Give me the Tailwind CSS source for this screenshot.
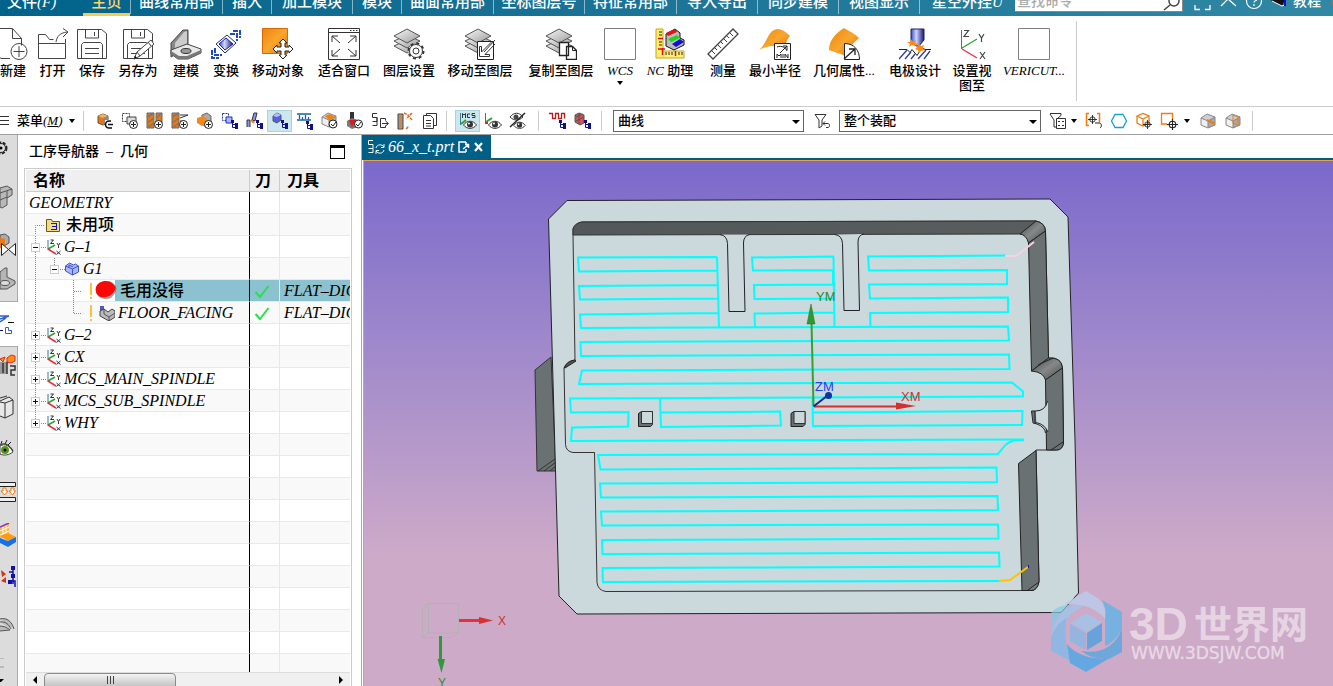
<!DOCTYPE html>
<html lang="zh-CN">
<head>
<meta charset="utf-8">
<title>66_x_t.prt</title>
<script src="https://cdn.jsdelivr.net/npm/@tailwindcss/browser@4"></script>
</head>
<body class="h-screen overflow-hidden flex flex-col bg-white text-black font-['Liberation_Serif','Noto_Sans_CJK_SC',serif]">

<svg class="absolute w-0 h-0" aria-hidden="true">
  <defs>
    <linearGradient id="orange" x1="0" y1="0" x2="1" y2="1"><stop offset="0" stop-color="#ee8410"/><stop offset=".5" stop-color="#f8a62c"/><stop offset="1" stop-color="#ea7308"/></linearGradient>
    <linearGradient id="steel" x1="0" y1="0" x2="1" y2="1"><stop offset="0" stop-color="#fafafa"/><stop offset="1" stop-color="#9a9a9a"/></linearGradient>
    <linearGradient id="blue" x1="0" y1="0" x2="1" y2="0"><stop offset="0" stop-color="#3b49c4"/><stop offset=".4" stop-color="#cdd5ff"/><stop offset="1" stop-color="#15157a"/></linearGradient>
    <symbol id="layers" viewBox="0 0 32 32"><g fill="url(#steel)" stroke="#555"><path d="M1 18l13 7 13-7-13-6z"/><path d="M1 13l13 7 13-7-13-6z"/><path d="M1 8l13 7 13-7L14 1z"/></g></symbol>
    <symbol id="floppy" viewBox="0 0 32 32"><path d="M1.500 1.500h24l5 4v25h-29zM9.500 2v8h13V2M18.500 4v4M5.500 30V16.500l2-2h17l2 2V30M9 20.500h14M9 25.500h14" fill="none" stroke="#444"/></symbol>
    <symbol id="csys" viewBox="0 0 16 16"><g fill="none"><path d="M2 1v10" stroke="#318096"/><path d="M2 10l7-4" stroke="#2ba52b" stroke-width="1.500"/><path d="M2 10l8 5" stroke="#f02846" stroke-width="1.500"/><path d="M4.500 1h3l-3 3.500h3.500M11 4l1.500 2.500L14 4M12.500 6.500V9M10.500 12l4 3.500M14.500 12l-4 3.500" stroke="#333"/></g></symbol>
    <symbol id="plus" viewBox="0 0 9 9"><circle cx="4.500" cy="4.500" r="4" fill="#fff" stroke="#222"/><path d="M4.500 2v5M2 4.500h5" stroke="#222"/></symbol>
    <symbol id="tree" viewBox="0 0 8 9"><path d="M1.500 1v6.500h4M1.500 4.500h4" fill="none" stroke="#10108c"/><path d="M0 0h3v3H0zM4 3h3v3H4zM4 6h3v3H4z" fill="#10108c"/></symbol>
    <symbol id="eye" viewBox="0 0 14 9"><path d="M.5 5C4 0 10 0 13.500 5 10 9.500 4 9.500 .5 5z" fill="#fff" stroke="#333"/><circle cx="7" cy="4.500" r="3" fill="#333"/><circle cx="6" cy="3.500" r="1" fill="#fff"/></symbol>
    <symbol id="box" viewBox="0 0 16 16"><path d="M1 5l6-4 8 3v8l-7 3-7-3z" fill="#cfcfcf"/><path d="M1 5l7 3v7l-7-3z" fill="#efefef"/><path d="M8 8l7-4v8l-7 3z" fill="#a9a9a9"/><path d="M1 5l6-4 8 3v8l-7 3-7-3zM1 5l7 3 7-4M8 8v7" fill="none" stroke="#888"/></symbol>
    <symbol id="obox" viewBox="0 0 12 13"><path d="M1 3l5-2 5 2v7l-5 2-5-2z" fill="#e9780c" stroke="#555"/><path d="M1 3l5 2 5-2-5-2z" fill="#f8b05a"/><path d="M6 5l5-2v7l-5 2z" fill="#888"/></symbol>
    <symbol id="target" viewBox="0 0 10 10"><circle cx="5" cy="5" r="3" fill="none" stroke="#222"/><path d="M5 0v10M0 5h10" stroke="#222"/></symbol>
    <symbol id="expand" viewBox="0 0 20 22"><path d="M9.500 0v22M15 11.500h5" stroke="#888" stroke-dasharray="1 1" fill="none"/><rect x="5.500" y="7.500" width="8" height="8" fill="#fff" stroke="#ccc"/><path d="M7 11.500h5M9.500 9v5" stroke="#111"/></symbol>
    <symbol id="tick" viewBox="0 0 16 16"><path d="M1.500 9l4.500 5 8.500-11" fill="none" stroke="#28e04c" stroke-width="2"/></symbol>
  </defs>
</svg>

<!-- Ribbon tabs -->
<header class="h-4 shrink-0 overflow-hidden bg-linear-to-r from-[#00628a] to-[#3088a5] flex text-white text-[15px] font-medium whitespace-nowrap">
  <nav class="flex shrink-0 h-4">
    <a href="#" class="w-[83px] pl-[7px] h-4 leading-4 -translate-y-1.5">文件<i>(F)</i></a>
    <a href="#" class="w-[47px] h-4 border-b-3 border-[#ffc84a] text-[#ffd468] text-center"><span class="block leading-4 -translate-y-1.5">主页</span></a>
    <a href="#" class="w-[93px] h-3.5 border-x border-white/50 text-center"><span class="block leading-4 -translate-y-1.5">曲线常用部</span></a>
    <a href="#" class="w-[49px] h-3.5 border-r border-white/50 text-center"><span class="block leading-4 -translate-y-1.5">插入</span></a>
    <a href="#" class="w-[81px] h-3.5 border-r border-white/50 text-center"><span class="block leading-4 -translate-y-1.5">加工模块</span></a>
    <a href="#" class="w-[49px] h-3.5 border-r border-white/50 text-center"><span class="block leading-4 -translate-y-1.5">模块</span></a>
    <a href="#" class="w-[92px] h-3.5 border-r border-white/50 text-center"><span class="block leading-4 -translate-y-1.5">曲面常用部</span></a>
    <a href="#" class="w-[91px] h-3.5 border-r border-white/50 text-center"><span class="block leading-4 -translate-y-1.5">坐标图层号</span></a>
    <a href="#" class="w-[92px] h-3.5 border-r border-white/50 text-center"><span class="block leading-4 -translate-y-1.5">特征常用部</span></a>
    <a href="#" class="w-[81px] h-3.5 border-r border-white/50 text-center"><span class="block leading-4 -translate-y-1.5">导入导出</span></a>
    <a href="#" class="w-[81px] h-3.5 border-r border-white/50 text-center"><span class="block leading-4 -translate-y-1.5">同步建模</span></a>
    <a href="#" class="w-[81px] h-3.5 border-r border-white/50 text-center"><span class="block leading-4 -translate-y-1.5">视图显示</span></a>
    <a href="#" class="w-[95px] h-3.5 text-center"><span class="block leading-4 -translate-y-1.5">星空外挂<i>U</i></span></a>
  </nav>
  <label class="w-[168px] shrink-0 h-3 bg-white border-b border-r border-[#888] flex justify-between overflow-hidden">
    <input aria-label="查找命令" placeholder="查找命令" class="w-32 h-4 -mt-1.5 pl-0.5 text-sm placeholder:text-[#aaa] outline-none">
    <svg class="w-5 h-3" viewBox="0 0 20 12" fill="none" stroke="#444" stroke-width="1.500"><circle cx="12" cy="1" r="5"/><path d="M8 5l-6 5"/></svg>
  </label>
  <div class="flex shrink-0">
    <button aria-label="全屏" class="w-[36px] h-4"><svg class="w-9 h-4" viewBox="0 0 36 16" fill="none" stroke="#fff" stroke-width="1.300"><path d="M12 5v4.500h5M22 9.500h5V5"/></svg></button>
    <button aria-label="最小化功能区" class="w-[24px] h-4"><svg class="w-6 h-4" viewBox="0 0 24 16" fill="none" stroke="#fff" stroke-width="1.300"><path d="M2 6l7-7 8 7"/></svg></button>
    <button aria-label="帮助" class="w-[26px] h-4"><svg class="w-[26px] h-4" viewBox="0 0 26 16" fill="none" stroke="#fff" stroke-width="1.200"><circle cx="11" cy="1" r="7.500"/><path d="M9-1c0-3 5-3 5 0 0 2-3 1.500-3 3.500M11 4v2"/></svg></button>
    <button class="flex h-4"><svg class="w-6 h-4" viewBox="0 0 24 16"><path d="M3 1l10 5 3-6H2z" fill="#111"/><path d="M3 1l10 5 3-1" stroke="#fff" fill="none"/><path d="M16 0v6" stroke="#1010c0" stroke-width="2"/></svg><span class="text-[14px] leading-4 -translate-y-1.5">教程</span></button>
    <svg class="w-4 h-4" viewBox="0 0 16 16"><circle cx="16" cy="2" r="6" fill="#777"/></svg>
  </div>
</header>

<!-- Ribbon commands -->
<section class="h-[91px] shrink-0 border-b border-[#ccc] flex overflow-hidden text-[13px] leading-[15px] text-center font-medium whitespace-nowrap *:shrink-0">
  <div class="flex items-start h-20 mt-[5px] -ml-[7px] border-r border-[#ccc] pr-0.5 *:shrink-0 *:flex *:flex-col *:items-center *:gap-[3px] *:pt-[7px] *:h-20">
    <button class="w-[40px]"><svg class="w-8 h-8" viewBox="0 0 32 32" fill="none" stroke="#444"><path d="M4 30H.5V.5h15l9 10v7M15.500 1v9.500h9M4 30.500h9"/><circle cx="22" cy="23.500" r="8"/><path d="M22 18v11M16.500 23.500h11"/></svg>新建</button>
    <button class="w-[39px]"><svg class="w-8 h-8" viewBox="0 0 32 32" fill="none" stroke="#444"><path d="M1.500 30.500V6.500h7l4 5h4M1.500 15.500h27v15h-27M19 14c1-6 4-9 11-10M26 .5l5 3.500-5 5M28.500 15v-4"/></svg>打开</button>
    <button class="w-[40px]"><svg class="w-8 h-8"><use href="#floppy"/></svg>保存</button>
    <button class="w-[52px]"><svg class="w-8 h-8" viewBox="0 0 32 32"><use href="#floppy"/><path d="M12 31l3-7 14-12 3 4-14 12z" fill="#fff" stroke="#444"/><path d="M12 31l1-3 2 2zM15 24l3 4M26 14l3 4" stroke="#444"/></svg>另存为</button>
    <button class="w-[44px]"><svg class="w-8 h-8" viewBox="0 0 32 32"><path d="M1 15L13 2l5 0v17L1 29z" fill="#888" stroke="#444"/><path d="M5 15L14 4l3-1v14L5 22z" fill="#ccc"/><path d="M1 22l16-6 14 5v4L18 31H8l-7-5z" fill="#e8e8e8" stroke="#444"/><path d="M31 22v3L18 31H8l-7-5v-3l8 5h8z" fill="#777"/><ellipse cx="16" cy="23" rx="5" ry="2.500" fill="#999" stroke="#333"/></svg>建模</button>
    <button class="w-[36px]"><svg class="w-8 h-8" viewBox="0 0 32 32"><path d="M6 16L17 7l9 8-11 10z" fill="#fff" stroke="#222c80"/><path d="M9 16l7-6 7 6-8 6z" fill="url(#blue)" stroke="#1b248c"/><path d="M23 3h7v7M20 6h7v7M2 22v8h7M5 20v7h7" fill="none" stroke="#2048c0" stroke-width="2" stroke-dasharray="5 1"/></svg>变换</button>
    <button class="w-[68px]"><svg class="w-8 h-8" viewBox="0 0 32 32"><path d="M.5.500h25v25H.5z" fill="url(#orange)" stroke="#d66a00"/><path d="M21 11l4 4h-2v4h4v-2l4 4-4 4v-2h-4v4h2l-4 4-4-4h2v-4h-4v2l-4-4 4-4v2h4v-4h-2z" fill="#fff" stroke="#222"/></svg>移动对象</button>
    <button class="w-[64px]"><svg class="w-8 h-8" viewBox="0 0 32 32" fill="none" stroke="#333"><path d="M.5.500h31v31H.5zM.5 4.500h31M22 2.500h1.500M25 2.500h1.500M28 2.500h1.500M4 14V8h6M4 8l8 7M22 8h6v6M28 8l-8 7M4 22v6h6M4 28l8-7M22 28h6v-6M28 28l-8-7"/></svg>适合窗口</button>
    <button class="w-[66px]"><svg class="w-8 h-8" viewBox="0 0 32 32"><use href="#layers"/><circle cx="23" cy="23" r="7.500" fill="#fff" stroke="#333" stroke-width="2" stroke-dasharray="3 2.900"/><circle cx="23" cy="23" r="6.500" fill="#fff" stroke="#333"/><circle cx="23" cy="23" r="3" fill="none" stroke="#333"/></svg>图层设置</button>
    <button class="w-[76px]"><svg class="w-8 h-8" viewBox="0 0 32 32"><use href="#layers"/><path d="M13.500 13.500h16v18h-16z" fill="#fff" stroke="#222"/><path d="M31 12L20 24M28 13.500L17.500 24v-5.500h-2v10h10v-2H21L31 16" fill="none" stroke="#333"/></svg>移动至图层</button>
    <button class="w-[86px]"><svg class="w-8 h-8" viewBox="0 0 32 32"><use href="#layers"/><path d="M14.500 14.500h9v13h-9zM21.500 18.500h6l4 4v9h-10z" fill="#fff" stroke="#222" stroke-width="1.300"/><path d="M27.500 18.500v4h4" fill="none" stroke="#222"/></svg>复制至图层</button>
    <button class="w-[32px]"><svg class="w-8 h-8" viewBox="0 0 32 32"><path d="M.5.500h31v31H.5z" fill="#fff" stroke="#808080"/></svg><i>WCS</i><svg class="w-1.5 h-1" viewBox="0 0 6 4"><path d="M0 0h6L3 4z"/></svg></button>
    <button class="w-[68px]"><svg class="w-8 h-8" viewBox="0 0 32 32"><path d="M2 1h7v22h21v7H2z" fill="#ffee72" stroke="#c9a515"/><path d="M5 4h3M5 7h3M5 14h3M5 17h3M12 24v3M15 24v3M18 24v3M25 24v3M28 24v3" stroke="#222"/><path d="M4 10.500h5M4 21h7M8.500 20v7M21.500 23v5" stroke="#e01010" stroke-width="1.500"/><path d="M12 6v12l8 4 10-5v-5l-4-2V5l-5-4z" fill="#bbb" stroke="#111"/><path d="M12 5l9-4 2 3-9 4z" fill="#e81010"/><path d="M14 11l9-4 3 3-9 4z" fill="#18d818"/><path d="M18 16l8-5 4 3-8 5z" fill="#1010d8"/></svg><span><i>NC</i> 助理</span></button>
    <button class="w-[38px]"><svg class="w-8 h-8" viewBox="0 0 32 32"><path d="M1 26L26 1l5 5L6 31z" fill="#fff" stroke="#444" stroke-width="1.300"/><path d="M5 23l3 3M8 20l2 2M11 17l3 3M14 14l2 2M17 11l3 3M20 8l2 2M23 5l3 3" stroke="#444"/></svg>测量</button>
    <button class="w-[66px]"><svg class="w-8 h-8" viewBox="0 0 32 32"><path d="M0 22C8 16 8 3 18 1c5 0 9 3 13 7-4 4-4 8-5 16-8-7-14-8-26-2z" fill="url(#orange)"/><path d="M15.500 15.500h16v16h-16z" fill="#fff" stroke="#222"/><path d="M18 19c5-2 9 1 10 4M21 25l7-7M24 18h4v4M18 30v-4l2 2 2-2v4M24 26v4M26 30v-4l3 4v-4" fill="none" stroke="#222"/></svg>最小半径</button>
    <button class="w-[72px]"><svg class="w-8 h-8" viewBox="0 0 32 32"><path d="M1 22C1 12 8 5 16 0c5 3 10 5 15 10-6 5-10 10-12 19-6-4-12-4-18-7z" fill="url(#orange)"/><path d="M16.500 15.500c10 0 15 7 15 16h-15z" fill="#fff" stroke="#222"/><path d="M16 31l11-10M21 21h6v6" fill="none" stroke="#222" stroke-width="1.300"/></svg>几何属性...</button>
    <button class="w-[70px]"><svg class="w-8 h-8" viewBox="0 0 32 32"><path d="M12 1h13v11l-5 6h-3l-5-5z" fill="url(#blue)" stroke="#222060"/><path d="M0 21.500h8l3 3 2-3 5 6 5-8 3 2h6" fill="none" stroke="#222"/><path d="M0 31l8-9M6 31l6-7M12 31l4-5M19 31l8-9M25 31l6-8" stroke="#2b3fa0" stroke-width="1.300"/><path d="M11 14l1-3 2 3 3-2-1 3 3 1-3 2-3-1-3 2 1-3-3-2zM19 18l1-2 2 2 3-1-1 3 2 2-4 1-2 2-1-3-3-1z" fill="#ff8a10"/></svg>电极设计</button>
    <button class="w-[44px]"><svg class="w-8 h-8" viewBox="0 0 32 32" fill="none"><path d="M5.500 2v19" stroke="#318096"/><path d="M6 20l15-9" stroke="#2ba52b" stroke-width="1.300"/><path d="M6 21l15 9" stroke="#f02846" stroke-width="1.300"/><path d="M8 2.500h4.500L8 8.500h5M23 6l2.500 4L28 6M25.500 10v4M24 24l5 7M29 24l-5 7" stroke="#444" stroke-width="1.200"/></svg><span>设置视<br>图至</span></button>
    <button class="w-[80px]"><svg class="w-8 h-8" viewBox="0 0 32 32"><path d="M.5.500h31v31H.5z" fill="#fff" stroke="#808080"/></svg><i>VERICUT...</i></button>
  </div>
</section>

<!-- Selection bar -->
<section class="h-7 shrink-0 border-b border-[#a0a0a0] flex items-center text-[13px] overflow-hidden font-medium *:shrink-0">
  <button class="flex items-center w-[83px] h-6 whitespace-nowrap"><svg class="w-[17px] h-3" viewBox="0 0 17 12"><path d="M0 1.500h9M0 5.500h9M0 9.500h9" stroke="#333"/></svg>菜单<i>(<u>M</u>)</i><svg class="w-1.5 h-1 ml-1.5" viewBox="0 0 6 4"><path d="M0 0h6L3 4z"/></svg></button>
  <div class="flex items-center border-l border-r border-[#ccc] pl-2 pr-1 h-5 *:w-[25px] *:h-[22px] *:flex *:items-center *:justify-center">
    <button aria-label="创建程序"><svg class="w-[18px] h-[18px]" viewBox="0 0 18 18"><use href="#obox" x="1" y="1" width="12" height="13"/><path d="M9 8h8v9H9z" fill="#fff"/><path d="M15 9h-2a3 3 0 000 7h3M12 12.500h5" fill="none" stroke="#111" stroke-width="1.600"/></svg></button>
    <button aria-label="创建几何"><svg class="w-[18px] h-[18px]" viewBox="0 0 18 18"><path d="M1.500 1.500h7v8h-7z" fill="#fff" stroke="#333" stroke-dasharray="2 1"/><path d="M6 5h9v7H6z" fill="#ddd" stroke="#444"/><use href="#plus" x="8" y="8" width="9" height="9"/></svg></button>
    <button aria-label="创建刀具"><svg class="w-[18px] h-[18px]" viewBox="0 0 18 18"><path d="M1 1h7v15H1zM10 1h6v10h-6z" fill="#e9780c" stroke="#666"/><path d="M1 5l7-4M1 11l7-5M1 16l7-5M10 6l6-5" stroke="#777" stroke-width="1.500"/><use href="#plus" x="8" y="8" width="9" height="9"/></svg></button>
    <button aria-label="创建方法"><svg class="w-[18px] h-[18px]" viewBox="0 0 18 18"><path d="M1 1h7v15H1z" fill="#e9780c" stroke="#666"/><path d="M1 5l7-4M1 11l7-5M1 16l7-5" stroke="#777" stroke-width="1.500"/><path d="M9 3h8M9 6l8-3M9 9h5" stroke="#333"/><use href="#plus" x="8" y="8" width="9" height="9"/></svg></button>
    <button aria-label="创建工序"><svg class="w-[18px] h-[18px]" viewBox="0 0 18 18"><path d="M6 3l5-2 4 3v9l-5 2-4-3z" fill="#aaa" stroke="#666"/><path d="M1 6l6-2 4 3v5l-5 2-5-3z" fill="#f08a20"/><use href="#plus" x="8" y="8" width="9" height="9"/></svg></button>
    <button aria-label="程序顺序视图"><svg class="w-[18px] h-[18px]" viewBox="0 0 18 18"><path d="M1.500 1.500h6v7h-6z" fill="#fff" stroke="#2233b0" stroke-dasharray="2 1"/><path d="M5 5h6v6H5z" fill="#a8b8ff" stroke="#2233b0"/><use href="#tree" x="10" y="8" width="8" height="9"/></svg></button>
    <button aria-label="机床视图"><svg class="w-[18px] h-[18px]" viewBox="0 0 18 18"><path d="M1 15V8h3v7M6 8l2-7h3L9 9z" fill="#8797ee" stroke="#333"/><path d="M5 8l3 3" stroke="#ee8010" stroke-width="2"/><use href="#tree" x="10" y="8" width="8" height="9"/></svg></button>
    <button aria-label="几何视图" class="bg-[#cde7ee] border border-[#a9d4df]"><svg class="w-[18px] h-[18px]" viewBox="0 0 18 18"><path d="M2 4l4-3 4 2v5l-4 3-4-2z" fill="#4d62e4" stroke="#555"/><path d="M2 4l4-3 4 2-4 2z" fill="#b3bfff"/><use href="#tree" x="10" y="8" width="8" height="9"/></svg></button>
    <button aria-label="加工方法视图"><svg class="w-[18px] h-[18px]" viewBox="0 0 18 18"><path d="M1 2h14M1 8h14M3.500 3v4M6.500 5v3M9.500 3v4M12.500 5v3" fill="none" stroke="#1860a0" stroke-width="1.300"/><use href="#tree" x="10" y="9" width="8" height="9"/></svg></button>
    <button aria-label="校验"><svg class="w-[18px] h-[18px]" viewBox="0 0 18 18"><use href="#box" width="16" height="16"/><path d="M4 4l5-2 5 3-5 4z" fill="#f08010"/><circle cx="12" cy="12" r="4" fill="#fff" stroke="#222"/><path d="M10 12l2 2 3-4" fill="none" stroke="#222"/></svg></button>
    <button aria-label="机床仿真"><svg class="w-[18px] h-[18px]" viewBox="0 0 18 18"><path d="M5 0v7M7 0v7" stroke="#333" stroke-width="2"/><path d="M1 9l5-3 6 2v7l-6 2-5-3z" fill="#777"/><path d="M3 8h7l-4 7z" fill="#e01818"/><circle cx="12.500" cy="12" r="4" fill="#fff" stroke="#222"/><path d="M10 12l2 2 3-4" fill="none" stroke="#222"/></svg></button>
    <button aria-label="后处理"><svg class="w-[18px] h-[18px]" viewBox="0 0 18 18" fill="none" stroke="#333"><path d="M6 1.500H1.500v4H6v4H1.500M6 5.500v8H1.500M9.500 6.500h5v2M9.500 6.500v9h5v-2M11 11.500h6M14.500 9l3 2.500-3 2.500"/></svg></button>
    <button aria-label="刀轨"><svg class="w-[18px] h-[18px]" viewBox="0 0 18 18"><path d="M2 2h5v15H2z" fill="#999" stroke="#444"/><path d="M4 2v15" stroke="#e9780c"/><path d="M8 1l4 2 4 5M16 1l-6 6M10 17l3-3" fill="none" stroke="#ee6a10" stroke-width="1.500" stroke-dasharray="3 1"/></svg></button>
    <button aria-label="车间文档"><svg class="w-[18px] h-[18px]" viewBox="0 0 18 18" fill="#fff" stroke="#333"><path d="M5.500 1.500h10v12h-10z"/><path d="M2.500 3.500h7l3 3v10h-10zM5 8.500h5M5 11.500h5M5 14h5"/></svg></button>
  </div>
  <div class="flex items-center border-r border-[#ccc] pl-2 pr-2 h-5 *:w-[25px] *:h-[22px] *:flex *:items-center *:justify-center">
    <button aria-label="MCS" class="bg-[#cde7ee] border border-[#a9d4df]"><svg class="w-[18px] h-[18px]" viewBox="0 0 18 18"><path d="M1.500 1v12" stroke="#318096"/><path d="M2 12l5-4" stroke="#2ba52b" stroke-width="2"/><path d="M3.500 6V1.500L5 3l1.500-1.500V6M11 2H8.500v3.500H11M16 1.500h-3v2h3v2h-3" fill="none" stroke="#333"/><use href="#eye" x="4" y="8" width="14" height="9"/></svg></button>
    <button aria-label="显示坐标系"><svg class="w-[18px] h-[18px]" viewBox="0 0 18 18"><path d="M1.500 1v10" stroke="#318096"/><path d="M2 10l6-4" stroke="#2ba52b" stroke-width="2"/><path d="M1 11h3" stroke="#e02020" stroke-width="2"/><use href="#eye" x="4" y="8" width="14" height="9"/></svg></button>
    <button aria-label="隐藏"><svg class="w-[18px] h-[18px]" viewBox="0 0 18 18"><path d="M1 5c4-5 9-5 13 0-4 4-9 4-13 0z" fill="none" stroke="#333"/><circle cx="7" cy="5" r="2.500" fill="#444"/><use href="#eye" x="4" y="9" width="13" height="8"/><path d="M1 15L16 1" stroke="#222" stroke-width="1.500"/></svg></button>
  </div>
  <div class="flex items-center border-r border-[#ccc] pl-1.5 pr-1.5 h-5 *:w-[25px] *:h-[22px] *:flex *:items-center *:justify-center">
    <button aria-label="刀轨列表"><svg class="w-[18px] h-[18px]" viewBox="0 0 18 18"><path d="M0 1.500h3.500v5h3v-5h3v5h3v-5h3v5" fill="none" stroke="#c01818" stroke-width="1.300"/><use href="#tree" x="10" y="8" width="8" height="9"/></svg></button>
    <button aria-label="工件列表"><svg class="w-[18px] h-[18px]" viewBox="0 0 18 18"><path d="M1 3l4-2 5 2v8l-4 2-5-3z" fill="#d85050" stroke="#555"/><path d="M2 5l7-3M2 9l8-4M5 1v11" stroke="#555"/><use href="#tree" x="10" y="8" width="8" height="9"/></svg></button>
  </div>
  <div class="relative w-[191px] ml-[11px]">
    <select aria-label="类型过滤器" class="appearance-none w-full h-[22px] border border-[#666] bg-white pl-1 leading-5"><option>曲线</option></select>
    <svg class="absolute right-1 top-2.5 w-2 h-1 pointer-events-none" viewBox="0 0 8 4"><path d="M0 0h8L4 4z"/></svg>
  </div>
  <button aria-label="重置过滤器" class="w-[35px] flex justify-center"><svg class="w-[18px] h-[18px]" viewBox="0 0 18 18" fill="none" stroke="#333"><path d="M2 2.500h11L9 8v6l-3 2V8zM10 11.500h5c2 0 2 4 0 4h-2M12 9.500l-2 2 2 2"/></svg></button>
  <div class="relative w-[202px]">
    <select aria-label="选择范围" class="appearance-none w-full h-[22px] border border-[#666] bg-white pl-1 leading-5"><option>整个装配</option></select>
    <svg class="absolute right-1 top-2.5 w-2 h-1 pointer-events-none" viewBox="0 0 8 4"><path d="M0 0h8L4 4z"/></svg>
  </div>
  <div class="flex items-center border-r border-[#ccc] pl-2 h-5 w-[212px] *:h-[22px] *:flex *:items-center">
    <button aria-label="过滤选项" class="w-[36px]"><svg class="w-[18px] h-[18px]" viewBox="0 0 18 18" fill="none" stroke="#333"><path d="M1 1.500h11v2L9 6M1 2l4 6v7h2M7.500 6.500h9v10h-9zM9 9.500h2M13 9.500h2M9 13.500h2M13 13.500h2"/></svg><svg class="w-1.5 h-1 ml-1" viewBox="0 0 6 4"><path d="M0 0h6L3 4z"/></svg></button>
    <button aria-label="选择意图" class="w-[25px]"><svg class="w-[18px] h-[18px]" viewBox="0 0 18 18" fill="none"><path d="M4 1.500H1.500v12H4M12 1.500h2.500v9" stroke="#ee7a10" stroke-width="1.500"/><use href="#target" x="3" y="3" width="9" height="9"/><path d="M10 11h4c3 0 3 4 1 5" stroke="#222"/></svg></button>
    <button aria-label="多边形" class="w-[25px]"><svg class="w-[18px] h-[18px]" viewBox="0 0 18 18"><path d="M1.500 9L5 2.500h8L16.500 9 13 15.500H5z" fill="none" stroke="#18a0d0" stroke-width="1.300"/></svg></button>
    <button aria-label="面选择" class="w-[25px]"><svg class="w-[18px] h-[18px]" viewBox="0 0 18 18"><path d="M2 4l6-2.500L14 4v7l-6 3-6-3zM2 4l6 3 6-3M8 7v7" fill="none" stroke="#ee7a10" stroke-width="1.300"/><use href="#target" x="8" y="8" width="9" height="9"/></svg></button>
    <button aria-label="点选择" class="w-[39px]"><svg class="w-[18px] h-[18px]" viewBox="0 0 18 18"><path d="M7 12H1.500V1.500h11V8" fill="none" stroke="#ee7a10" stroke-width="1.300"/><use href="#target" x="7" y="7" width="11" height="11"/></svg><svg class="w-1.5 h-1 ml-1.5" viewBox="0 0 6 4"><path d="M0 0h6L3 4z"/></svg></button>
    <button aria-label="截面" class="w-[25px]"><svg class="w-[18px] h-[18px]" viewBox="0 0 18 18"><use href="#box" x="1" y="1" width="16" height="16"/><path d="M8 8l8 4" stroke="#ee7a10" stroke-width="2"/></svg></button>
    <button aria-label="编辑截面" class="w-[20px]"><svg class="w-[18px] h-[18px]" viewBox="0 0 18 18"><use href="#box" x="1" y="1" width="16" height="16"/><path d="M9 3l5 2v8l-5-2z" fill="none" stroke="#ee7a10"/></svg></button>
  </div>
</section>

<main class="flex-1 min-h-0 flex">
  <!-- Resource bar -->
  <nav class="w-[18px] shrink-0 bg-[#dcdcdc] flex flex-col overflow-hidden *:shrink-0 *:w-[18px] *:border-r *:border-[#aaa] *:flex *:items-center">
    <button aria-label="设置" class="h-[26px]"><svg class="w-4 h-6" viewBox="0 0 16 24"><circle cx="1" cy="12" r="5.500" fill="none" stroke="#222" stroke-width="2" stroke-dasharray="3 1.500"/><circle cx="1" cy="12" r="4.500" fill="#ddd" stroke="#222"/><circle cx="1" cy="12" r="1.500"/></svg></button>
    <button aria-label="装配导航器" class="h-[72px]"><svg class="w-4 h-6" viewBox="0 0 16 24"><path d="M0 3l7-2 5 3v6l-5 3v7l-5 3-2-1z" fill="#b8b8b8" stroke="#555"/><path d="M0 8l12-4M7 13V6M0 15l7-3" stroke="#555"/></svg></button>
    <button aria-label="约束导航器" class="h-6"><svg class="w-4 h-6" viewBox="0 0 16 24"><path d="M0 2l5-1 4 3v6l-5 3-4-1z" fill="#aaa" stroke="#555"/><path d="M0 5l5 1v8l-5 1z" fill="#ec7810"/><path d="M1.500 10.500v12l14-12v12z" fill="#fff" stroke="#222"/></svg></button>
    <button aria-label="部件导航器" class="h-[45px] border-b"><svg class="w-4 h-6" viewBox="0 0 16 24"><path d="M0 5l5-4 2 0v9l8 4v3l-8 5H0z" fill="#b5b5b5" stroke="#555"/><ellipse cx="5" cy="16" rx="4.500" ry="2.500" fill="#ddd" stroke="#555"/></svg></button>
    <button aria-label="工序导航器" class="h-11 bg-white border-white!"><svg class="w-4 h-6" viewBox="0 0 16 24"><path d="M0 4h9M0 7l9-3M0 10l6-4" stroke="#2d61d2" stroke-width="1.500"/><path d="M8 10.500h6" stroke="#111"/><path d="M0 18.500h3" stroke="#111090"/><path d="M5.500 15.500v6h6v-3h-3v-3z" fill="#fff" stroke="#2d61d2"/></svg></button>
    <button aria-label="机床导航器" class="h-[38px] border-t"><svg class="w-4 h-6" viewBox="0 0 16 24"><path d="M7 4l4-3 4 1v5l-4 2-4-1zM0 5l5-2-2 5z" fill="#ff8a18" stroke="#e03010"/><path d="M0 8h7v12H0z" fill="#999"/><path d="M3 9v10M7 8v12M10 12h5v4h-4v5h4" fill="none" stroke="#333" stroke-width="1.500"/></svg></button>
    <button aria-label="重用库" class="h-[46px]"><svg class="w-4 h-6" viewBox="0 0 16 24"><path d="M0 6l9-4 4 3v14l-8 4-5-2M5 8l8-3M5 8v15M0 7l5 1M0 3l7-2" fill="#e8e8e8" stroke="#333"/></svg></button>
    <button aria-label="视图" class="h-[38px]"><svg class="w-4 h-6" viewBox="0 0 16 24"><path d="M0 9c5-3 10 0 13 6-4 3-9 4-13 2z" fill="#fff" stroke="#444"/><path d="M0 8c5-3 10 0 13 6M1 7l1-3M5 7l2-4M8 8l3-3" fill="none" stroke="#222"/><circle cx="5" cy="13" r="4" fill="#579814"/><circle cx="5" cy="13" r="1.500"/></svg></button>
    <button aria-label="对齐" class="h-12"><svg class="w-4 h-6" viewBox="0 0 16 24"><path d="M-2 2.500h17.500v4H-2zM-2 17.500h17.500v4H-2z" fill="#eee" stroke="#222"/><path d="M3 8h3v3h2l-3.500 4L1 11h2zM11 8h3v3h1.500l-3 4L9 11h2z" fill="#fff" stroke="#ee7a10"/></svg></button>
    <button aria-label="图库" class="h-[38px]"><svg class="w-4 h-6" viewBox="0 0 16 24"><path d="M0 4l9-4v12l-9 4z" fill="#ffb648"/><path d="M0 4l9-4M0 8l9-4M0 12l9-4M3 3v10M6 2v10" stroke="#fff"/><path d="M0 4l9-4" stroke="#8030c8" stroke-width="1.500"/><path d="M0 13l8-3 8 4-8 4z" fill="#ff9a10"/><path d="M0 15l8 3 8-4v5l-8 5-8-4z" fill="#1870e8"/></svg></button>
    <button aria-label="结构" class="h-11"><svg class="w-4 h-6" viewBox="0 0 16 24"><path d="M1 6l5 4-4 3M6 13l-5 4 5 2" fill="#e03010"/><path d="M13 3v17M9 8h4M9 17h6v6" fill="none" stroke="#1010b0" stroke-width="1.500"/><path d="M11 2h4v4h-4zM11 10h4v4h-4zM8 16h4v4H8z" fill="#1010b0"/></svg></button>
    <button aria-label="历史" class="h-[60px]"><svg class="w-4 h-6" viewBox="0 0 16 24"><path d="M0 3c7-2 12 3 14 10M0 6c6-1 9 3 11 7M0 10c4 0 8 2 10 4l-10 1" fill="#bbb" stroke="#555"/></svg></button>
    <button aria-label="更多" class="flex-1"><svg class="w-4 h-7" viewBox="0 0 16 28"><path d="M0 0h4M0 9h4" stroke="#999"/><path d="M0 21h4l-3 3H0z"/></svg></button>
  </nav>

  <!-- Operation navigator -->
  <aside class="w-[343px] shrink-0 flex flex-col pl-1.5 pr-[9px] bg-white">
    <div class="h-[33px] shrink-0 flex items-center justify-between pl-[5px] pr-[7px] text-sm font-medium">
      <h2 class="whitespace-pre">工序导航器  –  几何</h2>
      <button aria-label="最大化" class="w-[15px] h-3.5 border border-t-3 border-black"></button>
    </div>
    <div class="flex-1 min-h-0 flex flex-col border border-b-0 border-[#ccc] px-px pt-px">
      <div class="flex-1 min-h-0 overflow-hidden">
        <table class="w-full table-fixed border-separate border-spacing-0 text-base leading-[21px] font-medium [&_td]:p-0 [&_td]:h-[22px] [&_td]:border-b [&_td]:border-[#e8e8e8] [&_td:nth-child(1)]:border-r [&_td:nth-child(1)]:border-r-black [&_td:nth-child(2)]:border-r [&_td]:overflow-hidden [&_td]:whitespace-nowrap [&_tbody_tr:nth-child(even)]:bg-[#f9f9f9] [&_th]:h-[22px] [&_th]:p-0 [&_th]:text-left [&_th]:font-bold [&_th]:bg-[#efefef] [&_th]:border-b [&_th]:border-[#ccc]">
          <thead><tr><th class="w-[224px] border-r"><span class="pl-[7px]">名称</span></th><th class="w-[30px] border-r"><span class="pl-[5px]">刀</span></th><th><span class="pl-[7px]">刀具</span></th></tr></thead>
          <tbody>
            <tr><td><i class="pl-[3px]">GEOMETRY</i></td><td></td><td></td></tr>
            <tr><td><div class="flex items-center h-[21px]"><svg class="w-5 h-[22px]" viewBox="0 0 20 22"><path d="M9.500 22V11.500H19" fill="none" stroke="#888" stroke-dasharray="1 1"/></svg><svg class="w-3.5 h-3.5 mr-1.5" viewBox="0 0 14 14"><path d="M.5 1.500h5l1 2h7v10H.5z" fill="#f2dd82" stroke="#6a5a18"/><path d="M5 5.500h6M6 8.500h5M5 11.500h6M10.500 6v5" stroke="#1010c8"/></svg>未用项</div></td><td></td><td></td></tr>
            <tr><td><div class="flex items-center h-[21px]"><svg class="w-5 h-[22px]" viewBox="0 0 20 22"><path d="M9.500 0v22M15 11.500h5" stroke="#888" stroke-dasharray="1 1"/><rect x="5.500" y="7.500" width="8" height="8" fill="#fff" stroke="#ccc"/><path d="M7 11.500h5" stroke="#111"/></svg><svg class="w-4 h-4 mr-0.5"><use href="#csys"/></svg><i>G–1</i></div></td><td></td><td></td></tr>
            <tr><td><div class="flex items-center h-[21px]"><svg class="w-[39px] h-[22px]" viewBox="0 0 39 22"><path d="M9.500 0v22M28.500 0v7M34 11.500h5" stroke="#888" stroke-dasharray="1 1"/><rect x="24.500" y="7.500" width="8" height="8" fill="#fff" stroke="#ccc"/><path d="M26 11.500h5" stroke="#111"/></svg><svg class="w-3.5 h-3.5 mr-1" viewBox="0 0 14 14"><path d="M.5 4l4-3 4 2 2-1 3 2v6l-6 3-7-4z" fill="#a8b8fa" stroke="#4054d0"/><path d="M.5 4l7 3v6M7.500 7l6-3M4 6V3l4 2" fill="none" stroke="#4054d0"/></svg><i>G1</i></div></td><td></td><td></td></tr>
            <tr><td><div class="flex items-center h-[21px]"><svg class="w-[89px] h-[22px] shrink-0 overflow-visible" viewBox="0 0 89 22"><path d="M9.500 0v22M47.500 0v22M48 11.500h8" stroke="#888" stroke-dasharray="1 1"/><path d="M65 3v12M65 17v2" stroke="#ffc040" stroke-width="2"/></svg><span class="flex-1 h-[21px] bg-[#8cc1cf] pl-[5px] relative"><svg class="absolute -left-5 top-0 w-6 h-5" viewBox="0 0 24 20"><path d="M2 8C4 1 13-1 18 3s4 8 0 13-11 3-14 1-3-6-2-9z" fill="#555" opacity=".55"/><path d="M1 7C3 1 12-1 17 3s4 7 0 11-10 4-13 2-4-6-3-9z" fill="#fa0808"/></svg>毛用没得</span></div></td><td class="bg-[#8cc1cf]"><svg class="w-4 h-4 ml-1"><use href="#tick"/></svg></td><td class="bg-[#8cc1cf]"><i class="pl-1">FLAT–DIG</i></td></tr>
            <tr><td><div class="flex items-center h-[21px]"><svg class="w-[73px] h-[22px]" viewBox="0 0 73 22"><path d="M9.500 0v22M47.500 0v11.500H56" fill="none" stroke="#888" stroke-dasharray="1 1"/><path d="M65 3v12M65 17v2" stroke="#ffc040" stroke-width="2"/></svg><svg class="w-4 h-4 mr-[3px]" viewBox="0 0 16 16"><path d="M1 1h4v8H1z" fill="#5058b8"/><path d="M1 6l4-2 4 3 4-3 3 2v6l-6 4-9-5z" fill="#bbb" stroke="#444"/><path d="M5 5v4l5 3 6-4M10 12v4" fill="none" stroke="#555"/></svg><i>FLOOR_FACING</i></div></td><td><svg class="w-4 h-4 ml-1"><use href="#tick"/></svg></td><td><i class="pl-1">FLAT–DIG</i></td></tr>
            <tr><td><div class="flex items-center h-[21px]"><svg class="w-5 h-[22px]"><use href="#expand"/></svg><svg class="w-4 h-4 mr-0.5"><use href="#csys"/></svg><i>G–2</i></div></td><td></td><td></td></tr>
            <tr><td><div class="flex items-center h-[21px]"><svg class="w-5 h-[22px]"><use href="#expand"/></svg><svg class="w-4 h-4 mr-0.5"><use href="#csys"/></svg><i>CX</i></div></td><td></td><td></td></tr>
            <tr><td><div class="flex items-center h-[21px]"><svg class="w-5 h-[22px]"><use href="#expand"/></svg><svg class="w-4 h-4 mr-0.5"><use href="#csys"/></svg><i>MCS_MAIN_SPINDLE</i></div></td><td></td><td></td></tr>
            <tr><td><div class="flex items-center h-[21px]"><svg class="w-5 h-[22px]"><use href="#expand"/></svg><svg class="w-4 h-4 mr-0.5"><use href="#csys"/></svg><i>MCS_SUB_SPINDLE</i></div></td><td></td><td></td></tr>
            <tr><td><div class="flex items-center h-[21px]"><svg class="w-5 h-[22px]" viewBox="0 0 20 22"><path d="M9.500 0v8M15 11.500h5" stroke="#888" stroke-dasharray="1 1"/><rect x="5.500" y="7.500" width="8" height="8" fill="#fff" stroke="#ccc"/><path d="M7 11.500h5M9.500 9v5" stroke="#111"/></svg><svg class="w-4 h-4 mr-0.5"><use href="#csys"/></svg><i>WHY</i></div></td><td></td><td></td></tr>
            <tr><td></td><td></td><td></td></tr><tr><td></td><td></td><td></td></tr><tr><td></td><td></td><td></td></tr><tr><td></td><td></td><td></td></tr>
            <tr><td></td><td></td><td></td></tr><tr><td></td><td></td><td></td></tr><tr><td></td><td></td><td></td></tr><tr><td></td><td></td><td></td></tr>
            <tr><td></td><td></td><td></td></tr><tr><td></td><td></td><td></td></tr><tr><td></td><td></td><td></td></tr>
          </tbody>
        </table>
      </div>
      <div class="h-3.5 shrink-0 bg-[#f0f0f0] border-t border-[#ddd] flex items-center justify-between">
        <button aria-label="向左滚动" class="w-[18px] h-3.5 flex items-center justify-center"><svg class="w-1 h-2" viewBox="0 0 4 8"><path d="M4 0v8L0 4z"/></svg></button>
        <div class="w-[132px] h-3.5 rounded-t-sm border border-[#8a8a8a] bg-linear-to-b from-[#f4f4f4] to-[#c4c4c4] flex items-center justify-center gap-0.5 mr-auto"><span class="w-px h-2 bg-[#444]"></span><span class="w-px h-2 bg-[#444]"></span><span class="w-px h-2 bg-[#444]"></span></div>
        <button aria-label="向右滚动" class="w-[18px] h-3.5 flex items-center justify-center"><svg class="w-1 h-2" viewBox="0 0 4 8"><path d="M0 0v8l4-4z"/></svg></button>
      </div>
    </div>
  </aside>

  <!-- Graphics window -->
  <section class="flex-1 min-w-0 flex flex-col border-l border-[#aaa]">
    <div class="h-[25px] shrink-0 border-b-2 border-[#005f87] flex">
      <div class="w-[129px] h-[23px] bg-[#005f87] text-white flex items-center pl-1.5">
        <svg class="w-[18px] h-4 mr-0.5" viewBox="0 0 18 16" fill="none" stroke="#fff"><path d="M5 1.500H.5v4H5v4H.5M5 9.500v4H.5M8 9c1-4 6-4 8-1M16 5v3.500h-3M16 11c-1 4-6 4-8 1M8 15v-3.500h3"/></svg>
        <i class="text-base leading-5">66_x_t.prt</i>
        <svg class="w-3 h-3 ml-1" viewBox="0 0 12 12" fill="none" stroke="#fff" stroke-width="1.500"><path d="M8 1H1v10h7M8 1v3M8 8v3M5 8l5-4M7 3.500h3.500V7"/></svg>
        <button aria-label="关闭" class="ml-1"><svg class="w-2.5 h-2.5" viewBox="0 0 10 10"><path d="M1 1l7 8M8 1L1 9" stroke="#fff" stroke-width="2.200"/></svg></button>
      </div>
    </div>
    <div class="flex-1 min-h-0 ml-px border-t border-l border-[#f0a040] bg-linear-to-b from-[#7b69cb] to-[#cdaac8] to-75%">
      <svg class="block w-full h-full" viewBox="364 161 969 525" preserveAspectRatio="xMinYMin slice" font-family="Liberation Sans, sans-serif">
        <defs>
          <linearGradient id="wall" x1="0" y1="0" x2="1" y2="0"><stop offset="0" stop-color="#525859"/><stop offset="1" stop-color="#585d5e"/></linearGradient>
          <linearGradient id="round" x1="0" y1="0" x2="1" y2="1"><stop offset="0" stop-color="#444849"/><stop offset=".5" stop-color="#85898a"/><stop offset="1" stop-color="#444849"/></linearGradient>
        </defs>
        <!-- part body -->
        <path d="M551 357l-16 13 2 101h19z" fill="#697172" stroke="#333"/>
        <path d="M538 471l17-12M544 471l12-9M550 471l6-5" stroke="#333"/>
        <path d="M567 200.500L1050 199l18 18 7 223 3.500 153-17.500 19.500L577 614l-18-18-10.500-377z" fill="#cbd8dc" stroke="#222"/>
        <path d="M573 235v-6q2-6 9-7L1036 221q9 2 9.500 10l3 127q13-1 14 10l1 75q-1 7-7 7h-20.500l3 131q-2 9-8 9.500L606 591.500q-8-1-9-9L594.500 452.500H573q-7-1-7.500-8L564 368q2-6 11-8z" fill="#cbd8dc" stroke="#333"/>
        <path d="M573 235v-6q2-6 9-7L1036 221l-14 13z" fill="url(#wall)" stroke="#333"/>
        <path d="M1020 234l16-13q9 2 9.500 10l-17 12q-2-8-8.500-9z" fill="url(#round)" stroke="#222"/>
        <path d="M1028.500 243l17-12 3 127-17 13z" fill="#697172" stroke="#222"/>
        <path d="M1031.500 371l17-13q13-1 14 10l-17 12q-2-8-14-9z" fill="url(#round)" stroke="#222"/>
        <path d="M1045.500 380l17-12 1 75q-1 7-7 7h-10z" fill="#697172" stroke="#222"/>
        <path d="M1051 450l12-8M1038 365l15-7" stroke="#222"/>
        <path d="M1048 401q-3 9-10 10-8 0-6 11 12 1 16 10z" fill="#cbd8dc"/>
        <path d="M1031.500 411h4l1 12h-3z" fill="#697172"/>
        <path d="M1047.500 401q-2 10-12 10h-4l1.500 12 4 1q8 3 8.500 9M1035 411v12h3q7 2 10 9" fill="none" stroke="#222"/>
        <path d="M1018.500 463.500l17.500-13 3 131q-2 9-8 9h-9z" fill="#697172" stroke="#222"/>
        <path d="M1028 590l11-8q-2 9-8 8.500z" fill="url(#round)" stroke="#222"/>
        <path d="M564.500 368q2-7 10-8l1.500 1-11 7z" fill="#555" stroke="#222"/>
        <path d="M720 234.500q7 1 7.500 9L729 311.500h16L743.500 243q0-7 6-8.500M835 234.500q7 1 7.500 9L844 310.500h15.500L858 242q0-7 6-8" fill="#cbd8dc" stroke="#222"/>
        <path d="M638.500 413.500l3-2h11v13l-2 2h-12zM791 413.500l3-2h11v13l-2 2h-12z" fill="#697172" stroke="#222"/><path d="M641.500 411.500h11v12h-11zM794 411.500h11v12h-11z" fill="#cbd8dc" stroke="#333"/>
        <!-- tool path -->
        <g fill="none" stroke="#00ffff" stroke-width="2">
          <path d="M717 257L578 257.500L579 271.500L718 270.500M718 285L579 286L580 299.500L718 298.500M719 313L580 314.500L581 328L1008 326.500L1009 340.500L580.500 342L581 356L1009 354.500L1009.500 369L582 370.500L579 384L1012 382.500L1023 391.500V396.500L570 398.500L571 412.500L628.500 412L628 426.500L572 427.500L571 441L1024 439.500M717 257L719 327"/>
          <path d="M834 256.500L752 257.500L753 270.500L833 270V284.500L754 285L754.500 299L834 298.500M834 312.500L754.500 313.500L755 327M833.500 256.500L834.500 327"/>
          <path d="M1006 255.500L868 256.500L869 270.500L1007 270V284L869 284.500L870 298.500L1008 297.500V312L870 313L870.500 327"/>
          <path d="M660 399L661 427L781 425.500L780 411.500L660.500 412.500M812.500 398L813 426L1022 425L1022.500 411L813 412.500"/>
          <path d="M1024 440Q1009 439 1003 448L998 454L598 455L600.500 469.500L996.500 467.500L997 482L600 483.500L601 497.500L997.500 496L998 510L601 511.500L602 525.500L998 524.500L998.500 538.500L602 540L602.500 554L999 552.500L999.500 566.500L602.500 568L603 582L1000 581"/>
        </g>
        <path d="M1005 256h11l18-14" fill="none" stroke="#fbd0e4" stroke-width="2"/>
        <path d="M999 581l11-1 18-13" fill="none" stroke="#ffc400" stroke-width="2"/><path d="M1028.500 565v3" stroke="#1010e0"/>
        <!-- machine axes -->
        <path d="M811.500 322l2 84" stroke="#35a035" stroke-width="2"/><path d="M811 304l-4 20h8z" fill="#2f9a2f" stroke="#207020" stroke-width=".5"/>
        <path d="M814 406.500h84" stroke="#d03030" stroke-width="2"/><path d="M916 406l-20-3.500v7z" fill="#d03030"/>
        <path d="M813.500 406.500l14-11" stroke="#102a90" stroke-width="2"/><circle cx="828.500" cy="395.500" r="3.500" fill="#1030a8"/>
        <g font-size="13"><text x="816" y="301" fill="#2e8a2e">YM</text><text x="901" y="401" fill="#d03030">XM</text><text x="815" y="391" fill="#2040f0">ZM</text></g>
        <!-- view triad -->
        <path d="M427.500 603.500h31v29l-6 5h-30v-29zM428.500 604v29h30M428.500 633l-6 4.500" fill="none" stroke="#b3b1b3"/>
        <path d="M459 620.500h22" stroke="#e03535" stroke-width="3"/><path d="M493 620.500l-14-3.500v7z" fill="#d83030"/>
        <path d="M440.500 636v24" stroke="#2f9a3a" stroke-width="3"/><path d="M441.500 673l-4-14h7.500z" fill="#2f9a3a"/>
        <g font-size="12"><text x="498" y="625" fill="#d03030">X</text><text x="438" y="687" fill="#2e8a2e">Y</text></g>
        <!-- watermark -->
        <g opacity=".9">
          <path d="M1051 613q7-9 22-8-18 9-22 30z" fill="#86cbe8" opacity=".8"/>
          <path d="M1051 635q4-21 22-30l13-1-15 10q-8 8-6 24l-14 4z" fill="#a5c3e5"/>
          <path d="M1064 604l22-13 13 8q8 8 6 20-12-16-41-15z" fill="#bccbe9"/>
          <path d="M1051 637q5-14 16-19-5 19 4 43l-20-10z" fill="#8bb8e5"/>
          <path d="M1102 600l20 12v17q-8 14-17 17V620q2-12-3-20z" fill="#6eb2e5"/>
          <path d="M1122 629v23l-13 7q-16 1-28-8 30 5 41-22z" fill="#64a7dc"/>
          <path d="M1067 644q12 15 41 15l-22 13-16-9z" fill="#5aa8e4"/>
          <path d="M1086 613l16 9-15 10-17-9z" fill="#a5c3e5"/><path d="M1070 624l16 9v17l-16-9z" fill="#8fb7e2"/><path d="M1087 633l15-10v18l-15 9z" fill="#5da3dc"/>
        </g>
        <g fill="#fff" fill-opacity=".52" font-weight="bold">
          <text x="1129" y="640" font-size="46">3D</text>
          <text x="1194" y="638" font-size="38" font-family="Noto Sans CJK SC, sans-serif">世界网</text>
          <text x="1131" y="659" font-size="17" font-weight="normal" stroke="#fff" stroke-opacity=".3" stroke-width=".6" font-family="DejaVu Sans, sans-serif">WWW.3DSJW.COM</text>
        </g>
      </svg>
    </div>
  </section>
</main>
</body>
</html>
